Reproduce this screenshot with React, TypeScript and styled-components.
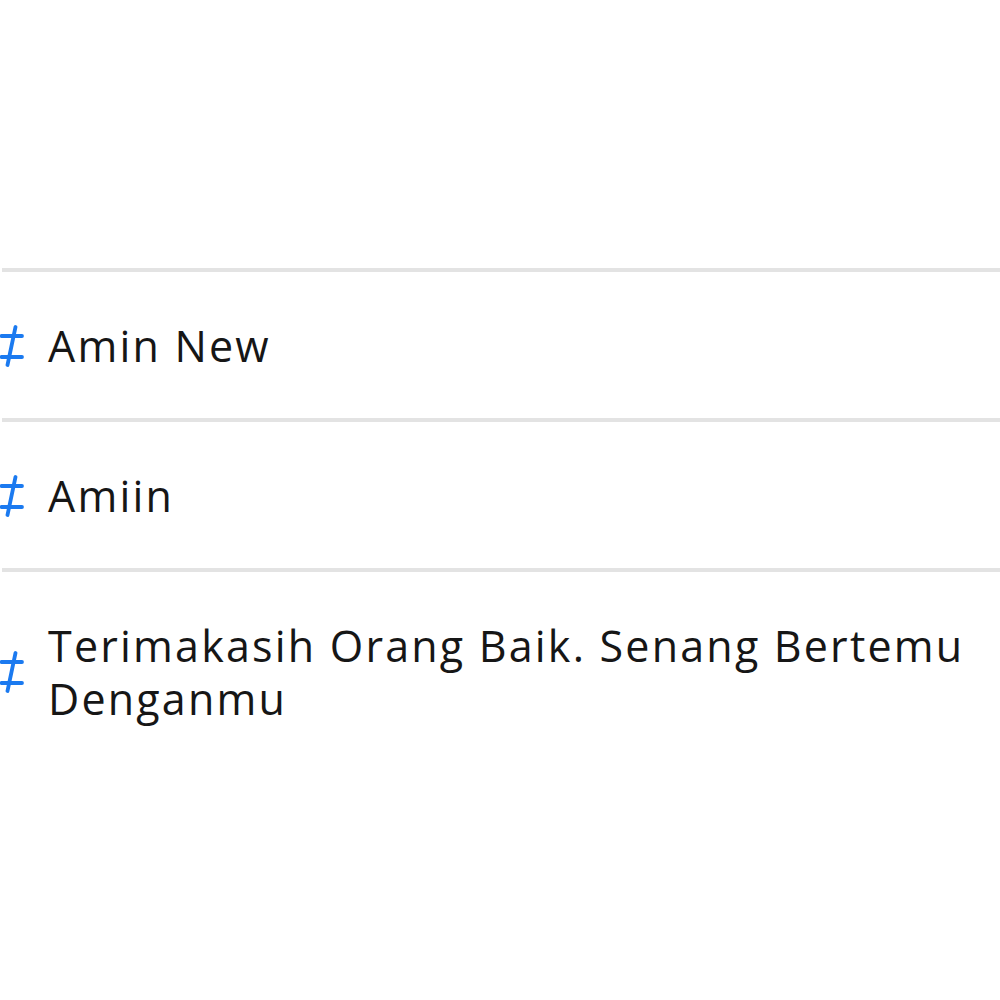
import React from "react";
import styled, { createGlobalStyle } from "styled-components";

const Global = createGlobalStyle`
  html, body { margin: 0; padding: 0; background: #ffffff; }
  body { font-family: "Open Sans", "Liberation Sans", sans-serif; }
`;

const Page = styled.div`
  width: 1000px;
  height: 1000px;
  background: #ffffff;
  padding-top: 268px;
  box-sizing: border-box;
  overflow: hidden;
`;

const List = styled.ul`
  list-style: none;
  margin: 0;
  padding: 0;
`;

const Row = styled.li`
  display: flex;
  align-items: center;
  gap: 24px;
  padding: 47px 20px 46px 0;
  border-top: 4px solid #e3e3e3;
  margin-left: 2px;
`;

const IconBox = styled.span`
  flex: 0 0 24px;
  display: flex;
  align-items: center;
  margin-left: -2px;
`;

const Label = styled.span`
  font-family: "Open Sans", "Liberation Sans", sans-serif;
  font-size: 43px;
  line-height: 53px;
  color: #161616;
  letter-spacing: 2.2px;
`;

const HashIcon = () => (
  <svg width="24" height="42" viewBox="0 0 24 42" aria-hidden="true">
    <g stroke="#1b7af0" strokeWidth="3.8" strokeLinecap="round" fill="none">
      <line x1="15.5" y1="2" x2="7.5" y2="40" />
      <line x1="1.5" y1="11" x2="22" y2="11" />
      <line x1="1.5" y1="32" x2="22" y2="32" />
    </g>
  </svg>
);

const items = [
  "Amin New",
  "Amiin",
  "Terimakasih Orang Baik. Senang Bertemu Denganmu",
];

export default function App() {
  return (
    <Page>
      <Global />
      <List>
        {items.map((t) => (
          <Row key={t}>
            <IconBox>
              <HashIcon />
            </IconBox>
            <Label>{t}</Label>
          </Row>
        ))}
      </List>
    </Page>
  );
}
